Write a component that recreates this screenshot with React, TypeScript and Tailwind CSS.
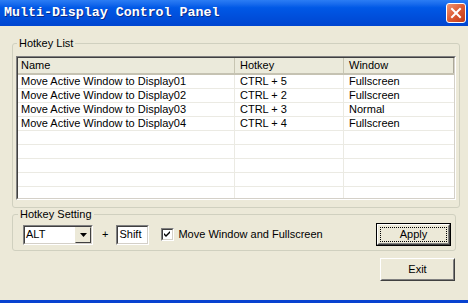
import React from 'react';

const rows = [
  { name: 'Move Active Window to Display01', hotkey: 'CTRL + 5', mode: 'Fullscreen' },
  { name: 'Move Active Window to Display02', hotkey: 'CTRL + 2', mode: 'Fullscreen' },
  { name: 'Move Active Window to Display03', hotkey: 'CTRL + 3', mode: 'Normal' },
  { name: 'Move Active Window to Display04', hotkey: 'CTRL + 4', mode: 'Fullscreen' },
  { name: '', hotkey: '', mode: '' },
  { name: '', hotkey: '', mode: '' },
  { name: '', hotkey: '', mode: '' },
  { name: '', hotkey: '', mode: '' },
  { name: '', hotkey: '', mode: '' },
];

const font = { fontFamily: '"Liberation Sans", Arial, sans-serif' };

// classic sunken edge used by list, edit boxes and checkbox
function Sunken({ className, children }: { className?: string; children?: React.ReactNode }) {
  return (
    <div className={`border border-t-[#808080] border-l-[#808080] border-b-white border-r-white ${className ?? ''}`}>
      <div className="flex h-full w-full border border-t-[#404040] border-l-[#404040] border-b-[#d4d0c8] border-r-[#d4d0c8] bg-white">
        {children}
      </div>
    </div>
  );
}

function Button({ label, isDefault }: { label: string; isDefault?: boolean }) {
  return (
    <button
      className={`h-[23px] w-[75px] bg-[#ece9d8] text-[11px] text-black ${
        isDefault ? 'border border-black' : ''
      }`}
    >
      <div className="h-full w-full border border-t-white border-l-white border-b-[#404040] border-r-[#404040]">
        <div className="h-full w-full border border-t-[#ece9d8] border-l-[#ece9d8] border-b-[#808080] border-r-[#808080] p-[1px]">
          <div
            className={`flex h-full w-full items-center justify-center ${
              isDefault ? 'border border-dotted border-black' : ''
            }`}
          >
            {label}
          </div>
        </div>
      </div>
    </button>
  );
}

export default function App() {
  return (
    <div className="flex h-screen w-full flex-col bg-[#ece9d8] text-black" style={font}>
      {/* Title bar */}
      <div className="flex h-[26px] shrink-0 items-center justify-between bg-linear-to-b from-[#2b7df4] via-[#0058e6] via-30% to-[#0045d0] pl-[4px] pr-[2px]">
        <span
          className="text-[13.3px] font-bold leading-none text-white [text-shadow:1px_1px_#0a2a8a]"
          style={{ fontFamily: '"Liberation Mono", "Courier New", monospace' }}
        >
          Multi-Display Control Panel
        </span>
        <button className="flex h-[20px] w-[20px] items-center justify-center rounded-[3px] border border-white bg-linear-to-br from-[#ee9575] via-[#dd5a32] to-[#c03a18]">
          <svg width="12" height="12" viewBox="0 0 12 12">
            <path d="M2 2 L10 10 M10 2 L2 10" stroke="white" strokeWidth="2" strokeLinecap="square" />
          </svg>
        </button>
      </div>

      {/* Body */}
      <div className="flex-1">
        <fieldset className="mx-[12px] mt-[11px] rounded-[3px] border border-[#d0d0bf] px-[3px] pb-[7px]">
          <legend className="ml-[1px] px-[2px] text-[11px] leading-[13px]">Hotkey List</legend>
          <Sunken className="mt-[6px] h-[144px] w-full">
            <div className="flex w-full flex-col overflow-hidden">
              <div className="flex h-[17px] shrink-0 border-b-2 border-[#c5c2b2] bg-[#ebeadb] text-[11px] leading-[15px]">
                <div className="w-[217px] border-r border-[#c7c5b2] pl-[3px]">Name</div>
                <div className="w-[109px] border-r border-[#c7c5b2] pl-[5px]">Hotkey</div>
                <div className="w-[110px] border-r border-[#aca899] pl-[5px]">Window</div>
              </div>
              {rows.map((r, i) => (
                <div key={i} className="flex h-[14px] shrink-0 border-b border-[#ebeae3] text-[11px] leading-[13px]">
                  <div className="w-[217px] border-r border-[#ebeae3] pl-[3px]">{r.name}</div>
                  <div className="w-[109px] border-r border-[#ebeae3] pl-[5px]">{r.hotkey}</div>
                  <div className="w-[110px] pl-[5px]">{r.mode}</div>
                </div>
              ))}
            </div>
          </Sunken>
        </fieldset>

        <fieldset className="mx-[12px] rounded-[3px] border border-[#d0d0bf] px-[3px] pb-[4px]">
          <legend className="ml-[2px] px-[2px] text-[11px] leading-[13px]">Hotkey Setting</legend>
          <div className="mt-[2px] flex h-[23px] items-center text-[11px]">
            <Sunken className="ml-[7px] h-[20px] w-[70px]">
              <div className="flex flex-1 items-center pl-[1px]">ALT</div>
              <div className="flex h-[16px] w-[16px] items-center justify-center border border-t-[#ece9d8] border-l-[#ece9d8] border-b-[#404040] border-r-[#404040] bg-[#ece9d8]">
                <svg width="7" height="4" viewBox="0 0 7 4">
                  <path d="M0 0 H7 L3.5 4 Z" fill="black" />
                </svg>
              </div>
            </Sunken>
            <span className="ml-[9px]">+</span>
            <Sunken className="ml-[8px] h-[20px] w-[33px]">
              <div className="flex items-center pl-[1px]">Shift</div>
            </Sunken>
            <Sunken className="ml-[12px] h-[13px] w-[13px]">
              <svg width="9" height="9" viewBox="0 0 9 9">
                <path d="M1 3 L3 5 L7 1 V3 L3 7 L1 5 Z" fill="black" />
              </svg>
            </Sunken>
            <span className="ml-[4px]">Move Window and Fullscreen</span>
            <div className="ml-auto mr-[1px]">
              <Button label="Apply" isDefault />
            </div>
          </div>
        </fieldset>

        <div className="mt-[7px] flex justify-end pr-[13px]">
          <Button label="Exit" />
        </div>
      </div>

      {/* bottom frame */}
      <div className="h-[3px] shrink-0 bg-[#0842d0]" />
    </div>
  );
}
